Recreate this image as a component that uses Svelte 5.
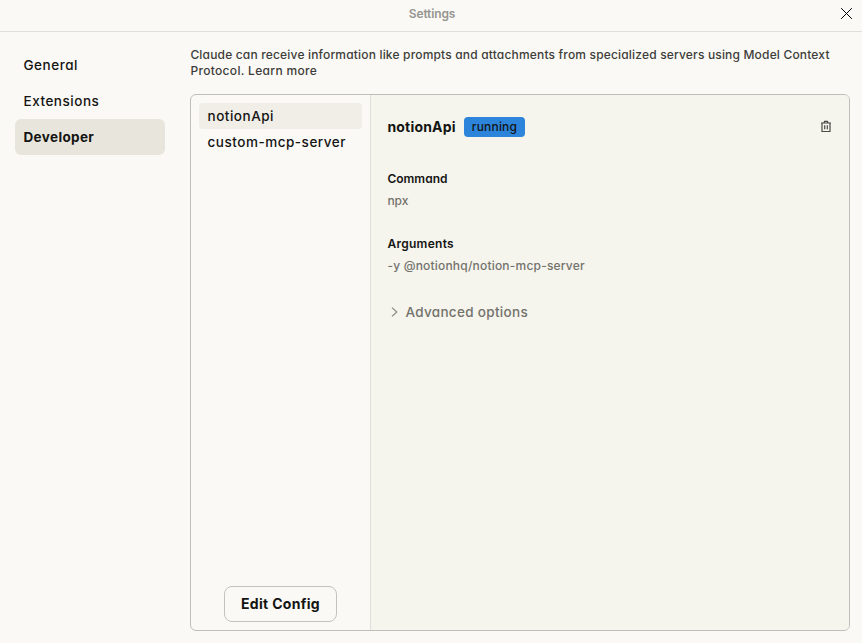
<script>
  const tabs = ['General', 'Extensions', 'Developer'];
  const servers = ['notionApi', 'custom-mcp-server'];
  let activeTab = $state('Developer');
  let activeServer = $state('notionApi');
</script>

<div class="window">
  <header>
    <span class="title">Settings</span>
    <button class="close" aria-label="Close">
      <svg width="11" height="11" viewBox="0 0 11 11"><path d="M0.5 0.5 10.5 10.5M10.5 0.5 0.5 10.5" fill="none" stroke="#000" stroke-width="1" stroke-linecap="square" /></svg>
    </button>
  </header>
  <div class="body">
    <nav>
      {#each tabs as tab}
        <button class="tab {tab.toLowerCase()}" class:active={tab === activeTab} onclick={() => (activeTab = tab)}>{tab}</button>
      {/each}
    </nav>
    <main>
      <p class="intro"><span class="first">Claude can receive information like prompts and attachments from specialized servers using Model Context</span><br /><span class="second">Protocol. Learn more</span></p>
      <section class="panel">
        <aside>
          <div class="list">
            {#each servers as server}
              <button class="server" class:selected={server === activeServer} onclick={() => (activeServer = server)}>{server}</button>
            {/each}
          </div>
          <button class="edit">Edit Config</button>
        </aside>
        <article>
          <div class="heading">
            <h2>notionApi</h2>
            <span class="badge">running</span>
            <button class="trash" aria-label="Delete">
              <svg width="12" height="13" viewBox="0 0 12 13" fill="none" stroke="#4a4a46" stroke-width="1.2"><path d="M1 3H11M4 2.8 4.6 1.4H7.4L8 2.8M2 3V11.5H10V3M4.7 5.3V9.2M7.3 5.3V9.2" /></svg>
            </button>
          </div>
          <h3 class="cmd">Command</h3>
          <p class="value npx">npx</p>
          <h3 class="args">Arguments</h3>
          <p class="value arg">-y @notionhq/notion-mcp-server</p>
          <button class="advanced">
            <svg width="7" height="10" viewBox="0 0 7 10" fill="none" stroke="#85847e" stroke-width="1.1"><path d="M1 0.6 5.8 5 1 9.4" /></svg>
            <span>Advanced options</span>
          </button>
        </article>
      </section>
    </main>
  </div>
</div>

<style>
  :global(body) { background: #faf9f5; }
  .window {
    box-sizing: border-box;
    width: 862px;
    height: 643px;
    display: flex;
    flex-direction: column;
    background: #faf9f5;
    color: #141413;
    font-family: Inter, 'Noto Sans', sans-serif;
    font-feature-settings: 'cv11';
    overflow: hidden;
  }
  button {
    font: inherit;
    font-feature-settings: inherit;
    color: inherit;
    background: none;
    border: 0;
    padding: 0;
    text-align: left;
    white-space: nowrap;
  }
  svg { display: block; }
  h2, h3, p { margin: 0; white-space: nowrap; }
  header {
    box-sizing: border-box;
    height: 32px;
    flex: none;
    display: grid;
    grid-template-columns: 1fr auto 1fr;
    padding: 0 10px 0 12px;
    border-bottom: 1px solid #dfded9;
  }
  .title {
    grid-column: 2;
    font-size: 12px;
    line-height: 28px;
    font-weight: 600;
    color: #969590;
    letter-spacing: -0.15px;
  }
  .close { justify-self: end; align-self: start; padding-top: 8px; }
  .body { display: flex; flex: 1; min-height: 0; }
  nav {
    width: 150px;
    padding: 15px 25px 0 15px;
    display: flex;
    flex-direction: column;
    flex: none;
  }
  .tab {
    height: 36px;
    padding-left: 8.5px;
    border-radius: 6px;
    font-size: 13.5px;
    line-height: 36px;
    font-weight: 550;
    letter-spacing: 0.52px;
  }
  .tab.active { background: #e8e6dc; font-weight: 700; letter-spacing: 0.36px; }
  main {
    flex: 1;
    display: flex;
    flex-direction: column;
    padding: 15px 12px 12px 0;
    min-width: 0;
  }
  .intro {
    height: 47px;
    padding-left: 0.4px;
    font-size: 12px;
    line-height: 16px;
    font-weight: 550;
    color: #3d3d3a;
  }
  .first { letter-spacing: 0.175px; }
  .second { letter-spacing: 0.32px; }
  .panel {
    flex: 1;
    display: flex;
    border: 1px solid #bfbeb9;
    border-radius: 6px;
    overflow: hidden;
  }
  aside {
    width: 163px;
    flex: none;
    padding: 8px 8px 8px;
    display: flex;
    flex-direction: column;
    justify-content: space-between;
    align-items: center;
    border-right: 1px solid #e0dfda;
  }
  .list { width: 100%; display: flex; flex-direction: column; }
  .server {
    height: 26px;
    padding-left: 8.5px;
    border-radius: 4px;
    font-size: 13.5px;
    line-height: 26px;
    font-weight: 550;
    letter-spacing: 0.52px;
  }
  .server.selected { background: #f0eee6; }
  .edit {
    box-sizing: border-box;
    width: 113px;
    height: 36px;
    padding-bottom: 1px;
    border: 1px solid #c3c2bd;
    border-radius: 8px;
    font-size: 14px;
    font-weight: 700;
    letter-spacing: 0.3px;
    text-align: center;
  }
  article {
    flex: 1;
    background: #f5f4ed;
    padding: 22px 17px 0 16.4px;
    display: flex;
    flex-direction: column;
    align-items: flex-start;
  }
  .heading { display: flex; align-items: center; align-self: stretch; height: 20px; margin-bottom: 34px; }
  h2 { width: 76.6px; font-size: 14px; line-height: 20px; font-weight: 700; letter-spacing: 0.2px; }
  .badge {
    width: 61px;
    height: 20px;
    border-radius: 4px;
    background: #2c84db;
    font-size: 12px;
    line-height: 20px;
    font-weight: 550;
    letter-spacing: 0.2px;
    text-align: center;
  }
  .trash { margin-left: auto; padding-bottom: 1px; }
  h3 { font-size: 12px; line-height: 16px; font-weight: 600; margin-bottom: 6px; }
  .args { letter-spacing: 0.28px; }
  .value { font-size: 12px; line-height: 16px; font-weight: 550; color: #73726c; margin-bottom: 27px; }
  .arg { letter-spacing: 0.2px; }
  .advanced {
    display: flex;
    align-items: center;
    gap: 7px;
    padding-left: 4px;
    height: 20px;
    margin-top: 1px;
    font-size: 13.5px;
    font-weight: 550;
    letter-spacing: 0.32px;
    color: #73726c;
  }
</style>
